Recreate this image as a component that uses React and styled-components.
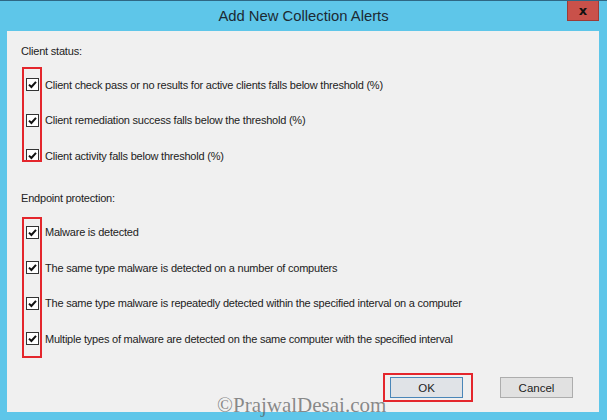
import React from "react";
import styled, { createGlobalStyle } from "styled-components";

const Global = createGlobalStyle`
  html, body { margin: 0; padding: 0; background: #5ec6e9; }
  body { font-family: "Liberation Sans", Arial, sans-serif; }
`;

const Window = styled.div`
  position: relative;
  width: 607px;
  height: 420px;
  box-sizing: border-box;
  background: #5ec6e9;
  border-top: 1px solid #2f6784;
  display: flex;
  flex-direction: column;
  overflow: hidden;
`;

const TitleBar = styled.div`
  position: relative;
  height: 30px;
  display: flex;
  align-items: center;
  justify-content: center;
  flex-shrink: 0;
`;

const Title = styled.div`
  font-family: "Liberation Sans", Arial, sans-serif;
  font-size: 14.8px;
  color: #1c2a33;
  padding-bottom: 1px;
`;

const CloseButton = styled.div`
  position: absolute;
  top: -1px;
  right: 8px;
  width: 32px;
  height: 21px;
  box-sizing: border-box;
  background: #c9514a;
  border: 1px solid #9c3b36;
  border-top: none;
  display: flex;
  align-items: center;
  justify-content: center;
  color: #111;
  font-weight: bold;
  font-size: 13px;
  font-family: "DejaVu Sans", sans-serif;
`;

const Content = styled.div`
  margin: 0 8px 8px 7px;
  flex: 1;
  background: #f0f0f0;
  display: flex;
  flex-direction: column;
  padding: 12px 26px 0 14px;
`;

const SectionLabel = styled.div`
  font-size: 11px;
  letter-spacing: -0.2px;
  line-height: 16px;
  color: #222;
  margin-top: ${(p) => p.$top || 0}px;
`;

const Group = styled.div`
  position: relative;
  margin-top: ${(p) => p.$top || 0}px;
  padding-left: 5px;
`;

const Highlight = styled.div`
  position: absolute;
  left: 1px;
  top: ${(p) => p.$top}px;
  width: 20px;
  height: ${(p) => p.$h}px;
  box-sizing: border-box;
  border: 2px solid #e4262c;
  pointer-events: none;
`;

const Row = styled.div`
  height: 35.5px;
  display: flex;
  align-items: center;
  gap: 6px;
`;

const Box = styled.span`
  width: 13px;
  height: 13px;
  box-sizing: border-box;
  border: 1px solid #333;
  background: #fff;
  display: flex;
  align-items: center;
  justify-content: center;
  flex-shrink: 0;
`;

const Label = styled.span`
  font-size: 11px;
  letter-spacing: -0.22px;
  color: #222;
  white-space: nowrap;
`;

const Buttons = styled.div`
  margin-top: auto;
  margin-bottom: 14px;
  display: flex;
  justify-content: flex-end;
  gap: 37px;
`;

const Button = styled.div`
  position: relative;
  width: 73px;
  height: 21px;
  box-sizing: border-box;
  background: ${(p) => (p.$default ? "#e0e3e7" : "#e1e1e1")};
  border: 1px solid ${(p) => (p.$default ? "#4a86b8" : "#adadad")};
  display: flex;
  align-items: center;
  justify-content: center;
  font-size: 11.5px;
  color: #222;
`;

const ButtonMark = styled.div`
  position: absolute;
  left: -8px;
  right: -11px;
  top: -5px;
  bottom: -5px;
  border: 2px solid #e4262c;
  pointer-events: none;
`;

const Watermark = styled.div`
  position: absolute;
  left: 217px;
  top: 392px;
  font-family: "Liberation Serif", "Times New Roman", serif;
  font-size: 21px;
  color: rgba(90, 90, 90, 0.7);
  white-space: nowrap;
`;

const Check = () => (
  <Box>
    <svg width="9" height="9" viewBox="0 0 9 9">
      <path d="M1 4.6 L3.4 7 L8 1.8" fill="none" stroke="#111" strokeWidth="2" />
    </svg>
  </Box>
);

const client = [
  "Client check pass or no results for active clients falls below threshold (%)",
  "Client remediation success falls below the threshold (%)",
  "Client activity falls below threshold (%)",
];

const endpoint = [
  "Malware is detected",
  "The same type malware is detected on a number of computers",
  "The same type malware is repeatedly detected within the specified interval on a computer",
  "Multiple types of malware are detected on the same computer with the specified interval",
];

export default function App() {
  return (
    <>
      <Global />
      <Window>
        <TitleBar>
          <Title>Add New Collection Alerts</Title>
          <CloseButton>x</CloseButton>
        </TitleBar>
        <Content>
          <SectionLabel>Client status:</SectionLabel>
          <Group $top={8}>
            {client.map((t) => (
              <Row key={t}>
                <Check />
                <Label>{t}</Label>
              </Row>
            ))}
            <Highlight $top={0} $h={95} />
          </Group>
          <SectionLabel $top={16}>Endpoint protection:</SectionLabel>
          <Group $top={9}>
            {endpoint.map((t) => (
              <Row key={t}>
                <Check />
                <Label>{t}</Label>
              </Row>
            ))}
            <Highlight $top={2} $h={141} />
          </Group>
          <Buttons>
            <Button $default>
              OK
              <ButtonMark />
            </Button>
            <Button>Cancel</Button>
          </Buttons>
        </Content>
        <Watermark>©PrajwalDesai.com</Watermark>
      </Window>
    </>
  );
}
